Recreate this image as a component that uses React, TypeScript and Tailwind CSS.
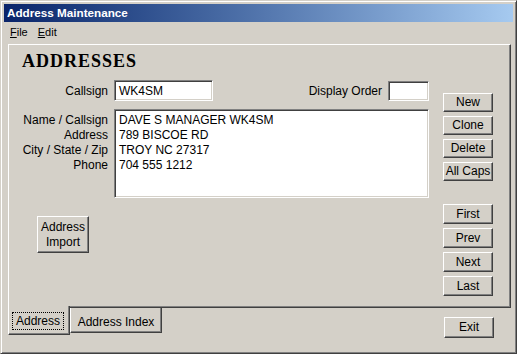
import type { ReactNode } from 'react';

const raised =
  'bg-[#d4d0c8] border border-t-white border-l-white border-r-[#404040] border-b-[#404040] shadow-[inset_-1px_-1px_0_#808080]';
const sunken =
  'bg-white border border-t-[#808080] border-l-[#808080] border-r-white border-b-white shadow-[inset_1px_1px_0_#404040,inset_-1px_-1px_0_#d4d0c8]';

function WinButton({ children, className = '' }: { children: ReactNode; className?: string }) {
  return (
    <button
      type="button"
      className={`flex items-center justify-center text-center text-[12px] leading-[15px] text-black ${raised} ${className}`}
    >
      {children}
    </button>
  );
}

const labels = ['Name / Callsign', 'Address', 'City / State / Zip', 'Phone'];
const lines = ['DAVE S MANAGER WK4SM', '789 BISCOE RD', 'TROY NC 27317', '704 555 1212'];

export default function App() {
  return (
    <div className="w-[517px] h-[354px] bg-[#d4d0c8] border border-t-[#d4d0c8] border-l-[#d4d0c8] border-r-[#404040] border-b-[#404040] shadow-[inset_1px_1px_0_#ffffff,inset_-1px_-1px_0_#808080] p-[3px] flex flex-col overflow-hidden font-['Liberation_Sans',Arial,sans-serif] text-black">
      {/* Title bar */}
      <div className="h-[18px] flex items-center pl-[3px] bg-linear-to-r from-[#0a246a] to-[#a6caf0] text-white font-bold text-[11.7px]">
        Address Maintenance
      </div>

      {/* Menu */}
      <div className="h-[20px] flex items-center pl-[6px] gap-[10px] text-[11px]">
        <span>
          <span className="underline">F</span>ile
        </span>
        <span>
          <span className="underline">E</span>dit
        </span>
      </div>

      {/* Tab page */}
      <div className="mt-[2px] ml-[4px] w-[503px] h-[264px] shrink-0 flex border border-t-white border-l-white border-r-[#404040] border-b-[#404040] shadow-[inset_-1px_-1px_0_#808080]">
        <div className="w-[420px] flex flex-col text-[12px]">
          <div className="mt-[7px] ml-[13px] font-['Liberation_Serif','Times_New_Roman',serif] font-bold text-[18px] leading-none tracking-[1px]">
            ADDRESSES
          </div>

          {/* Callsign / display order */}
          <div className="mt-[10px] h-[21px] flex items-center">
            <div className="w-[99px] text-right">Callsign</div>
            <div className={`ml-[6px] w-[99px] h-[21px] flex items-center pl-[4px] ${sunken}`}>WK4SM</div>
            <div className="flex-1" />
            <div>Display Order</div>
            <div className={`ml-[6px] w-[41px] h-[20px] ${sunken}`} />
          </div>

          {/* Address block */}
          <div className="mt-[8px] flex items-start leading-[15px]">
            <div className="w-[99px] pt-[4px] text-right">
              {labels.map((l) => (
                <div key={l}>{l}</div>
              ))}
            </div>
            <div className={`ml-[6px] flex-1 h-[89px] pt-[3px] pl-[4px] ${sunken}`}>
              {lines.map((l) => (
                <div key={l}>{l}</div>
              ))}
            </div>
          </div>

          <WinButton className="mt-[18px] ml-[28px] w-[52px] h-[37px] flex-col">
            <span>Address</span>
            <span>Import</span>
          </WinButton>
        </div>

        {/* Right buttons */}
        <div className="ml-[14px] w-[50px] pt-[48px] flex flex-col">
          <div className="flex flex-col gap-[4px]">
            <WinButton className="h-[19px]">New</WinButton>
            <WinButton className="h-[19px]">Clone</WinButton>
            <WinButton className="h-[19px]">Delete</WinButton>
            <WinButton className="h-[19px]">All Caps</WinButton>
          </div>
          <div className="mt-[23px] flex flex-col gap-[4px]">
            <WinButton className="h-[20px]">First</WinButton>
            <WinButton className="h-[20px]">Prev</WinButton>
            <WinButton className="h-[20px]">Next</WinButton>
            <WinButton className="h-[20px]">Last</WinButton>
          </div>
        </div>
      </div>

      {/* Tabs + Exit */}
      <div className="-mt-[2px] ml-[4px] flex items-start text-[12px] leading-[15px]">
        <div className="relative z-10 w-[62px] h-[29px] bg-[#d4d0c8] border-l border-l-white border-r border-r-[#404040] border-b border-b-[#404040] shadow-[inset_-1px_-1px_0_#808080] pl-[3px] pt-[6px]">
          <div className="w-[52px] h-[18px] border border-dotted border-black flex items-center justify-center">
            Address
          </div>
        </div>
        <div className="mt-[2px] w-[92px] h-[25px] flex justify-center pt-[7px] border-l border-l-white border-r border-r-[#404040] border-b border-b-[#404040] shadow-[inset_-1px_-1px_0_#808080]">
          Address Index
        </div>
        <WinButton className="ml-auto mr-[19px] mt-[11px] w-[50px] h-[21px]">Exit</WinButton>
      </div>
    </div>
  );
}
